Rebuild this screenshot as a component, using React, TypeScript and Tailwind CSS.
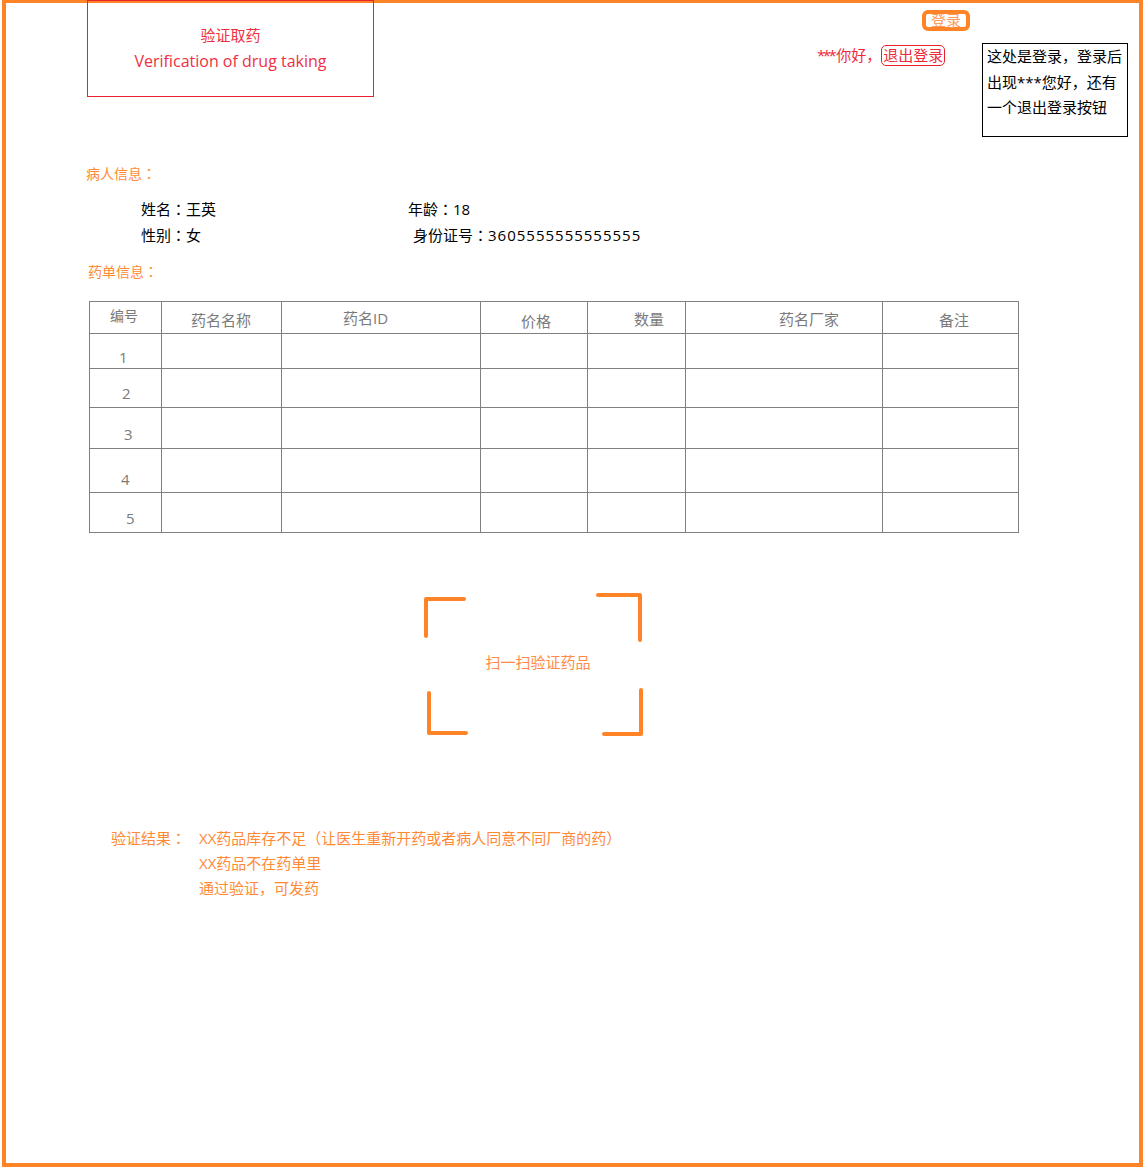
import React from "react";

const orange = "#ff8427";

const columns = [
    { label: "编号", pl: "pl-[20px]", pt: "pt-[4px]", size: "text-[14px]" },
    { label: "药名名称", pl: "pl-[29px]", pt: "pt-[8px]", size: "text-[15px]" },
    { label: "药名ID", pl: "pl-[61px]", pt: "pt-[6px]", size: "text-[15px]" },
    { label: "价格", pl: "pl-[40px]", pt: "pt-[9px]", size: "text-[15px]" },
    { label: "数量", pl: "pl-[46px]", pt: "pt-[7px]", size: "text-[15px]" },
    { label: "药名厂家", pl: "pl-[93px]", pt: "pt-[7px]", size: "text-[15px]" },
    { label: "备注", pl: "pl-[56px]", pt: "pt-[8px]", size: "text-[15px]" },
];

const rows = [
    { no: "1", h: "h-[35px]", pt: "pt-[13px]", pl: "pl-[29px]" },
    { no: "2", h: "h-[39px]", pt: "pt-[14px]", pl: "pl-[32px]" },
    { no: "3", h: "h-[41px]", pt: "pt-[16px]", pl: "pl-[34px]" },
    { no: "4", h: "h-[44px]", pt: "pt-[20px]", pl: "pl-[31px]" },
    { no: "5", h: "h-[40px]", pt: "pt-[15px]", pl: "pl-[36px]" },
];

// centred full-width colon, like the original's font
const Colon = () => (
    <span className="leading-[0px]" style={{ fontFamily: '"Noto Sans CJK TC", sans-serif' }}>
        ：
    </span>
);

const DrugTable = () => {
    return (
        <div className="ml-[83px] mt-[19px] w-[930px] grid grid-cols-[72px_120px_199px_107px_98px_197px_136px] border-l border-t border-[#808080] text-[#7a7a7a] leading-[20px]">
            {columns.map((c) => (
                <div key={c.label} className={`h-[32px] border-r border-b border-[#808080] whitespace-nowrap ${c.pl} ${c.pt} ${c.size}`}>
                    {c.label}
                </div>
            ))}
            {rows.map((r) => (
                <React.Fragment key={r.no}>
                    <div className={`${r.h} ${r.pt} ${r.pl} border-r border-b border-[#808080] text-[15px]`}>{r.no}</div>
                    {columns.slice(1).map((c) => (
                        <div key={c.label} className={`${r.h} border-r border-b border-[#808080]`} />
                    ))}
                </React.Fragment>
            ))}
        </div>
    );
};

const ScanBox = () => {
    return (
        <div className="relative ml-[417px] mt-[59px] w-[222px] h-[146px] flex items-center justify-center">
            <svg className="absolute inset-0" width="222" height="146" viewBox="0 0 222 146" fill="none" stroke={orange} strokeWidth="4" strokeLinecap="round" strokeLinejoin="round">
                <polyline points="41,7 3,7 3,44" />
                <polyline points="175,3 217,3 217,48" />
                <polyline points="6,101 6,141 43,141" />
                <polyline points="181,142 218,142 218,98" />
            </svg>
            <span className="relative pl-[8px] pb-[6px] text-[15px] leading-[20px] text-[#ff8a4a]">扫一扫验证药品</span>
        </div>
    );
};

export default function App() {
    return (
        <div className="w-[1145px] h-[1169px] bg-white pl-[2px]" style={{ fontFamily: '"Open Sans", "Noto Sans CJK SC", sans-serif' }}>
            <div className="w-[1141px] h-[1167px] border-[4px] border-t-[3px] border-[#ff8427]">
                <div className="flex items-start">
                    <div className="ml-[81px] mt-[-3px] w-[287px] h-[97px] border border-[#e8222c] flex flex-col items-center pt-[21px] leading-[26px] text-[#ef2f3f]">
                        <div className="text-[15px]">验证取药</div>
                        <div className="text-[16px]">Verification of drug taking</div>
                    </div>
                    <div className="ml-[443px] mt-[7px] flex flex-col">
                        <div className="ml-[105px] w-[48px] h-[21px] border-[4px] border-[#ff8427] rounded-[6px] flex items-center justify-center text-[15px] leading-none text-[#ff9a5a]">
                            登录
                        </div>
                        <div className="mt-[12px] flex items-start">
                            <div className="w-[165px] mt-[2px] flex items-center text-[15px] leading-[19px] text-[#ee2a3a] whitespace-nowrap">
                                <span className="tracking-[-2.5px]">***</span>
                                <span className="pl-[2px]">你好，</span>
                                <span className="border border-[#e8222c] rounded-[5px] px-[1px]">退出登录</span>
                            </div>
                            <div className="w-[146px] h-[94px] border border-black px-[4px] text-[15px] leading-[25.5px] text-black whitespace-nowrap">
                                这处是登录，登录后
                                <br />
                                出现***您好，还有
                                <br />
                                一个退出登录按钮
                            </div>
                        </div>
                    </div>
                </div>

                <div className="ml-[80px] mt-[27px] text-[14px] leading-[20px] text-[#ff8a36]">
                    病人信息<Colon />
                </div>
                <div className="ml-[135px] mt-[12px] grid grid-cols-[267px_auto] text-[15px] leading-[26px] text-black">
                    <div>
                        姓名<Colon />王英
                    </div>
                    <div>
                        年龄<Colon />18
                    </div>
                    <div>
                        性别<Colon />女
                    </div>
                    <div className="ml-[5px]">
                        身份证号<Colon />
                        <span className="tracking-[1px]">3605555555555555</span>
                    </div>
                </div>

                <div className="ml-[82px] mt-[14px] text-[14px] leading-[20px] text-[#ff8a36]">
                    药单信息<Colon />
                </div>
                <DrugTable />

                <ScanBox />

                <div className="ml-[105px] mt-[88px] flex text-[15px] leading-[25px] text-[#ff8a36] [text-spacing-trim:space-all]">
                    <div className="w-[88px]">
                        验证结果<Colon />
                    </div>
                    <div className="flex flex-col">
                        <div>XX药品库存不足（让医生重新开药或者病人同意不同厂商的药）</div>
                        <div>XX药品不在药单里</div>
                        <div>通过验证，可发药</div>
                    </div>
                </div>
            </div>
        </div>
    );
}
